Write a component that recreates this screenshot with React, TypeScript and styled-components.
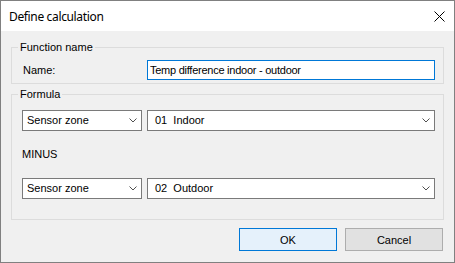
import React from "react";
import styled, { createGlobalStyle } from "styled-components";

const GlobalStyle = createGlobalStyle`
  html, body {
    margin: 0;
    padding: 0;
    background: #ffffff;
  }
  * {
    box-sizing: border-box;
  }
`;

const Window = styled.div`
  width: 455px;
  height: 263px;
  border: 1px solid #808080;
  display: flex;
  flex-direction: column;
  font-family: "Liberation Sans", Arial, sans-serif;
  font-size: 11px;
  color: #000;
`;

const TitleBar = styled.div`
  height: 30px;
  flex: none;
  background: #fff;
  display: flex;
  align-items: center;
  justify-content: space-between;
  padding: 0 9px 0 8px;
`;

const Title = styled.span`
  font-family: "Noto Sans", "Open Sans", sans-serif;
  font-size: 12px;
  letter-spacing: -0.35px;
  line-height: 16px;
  margin-top: 1px;
`;

const CloseIcon = styled.svg`
  display: block;
  margin-top: 1px;
`;

const Body = styled.div`
  flex: 1;
  background: #f0f0f0;
  padding: 10px 10px 0 10px;
  display: flex;
  flex-direction: column;
`;

const Group = styled.fieldset<{ $gap?: number }>`
  margin: ${(p) => p.$gap ?? 0}px 0 0 0;
  padding: 0;
  border: 1px solid #dcdcdc;
  min-width: 0;
`;

const Legend = styled.legend`
  margin-left: 6px;
  padding: 0 2px;
  line-height: 13px;
  font-size: 11px;
`;

const GroupContent = styled.div<{ $top: number; $bottom: number }>`
  padding: ${(p) => p.$top}px 8px ${(p) => p.$bottom}px 10px;
`;

const NameRow = styled.div`
  display: grid;
  grid-template-columns: 125px 1fr;
  align-items: center;
`;

const Label = styled.span`
  line-height: 13px;
  padding-left: 1px;
`;

const TextInput = styled.input`
  height: 20px;
  width: 100%;
  border: 1px solid #0078d7;
  background: #fff;
  outline: none;
  padding: 0 2px;
  margin: 0;
  font-family: "Liberation Sans", Arial, sans-serif;
  font-size: 11px;
  letter-spacing: -0.25px;
  color: #000;
`;

const ComboRow = styled.div`
  display: flex;
  gap: 5px;
`;

const Combo = styled.div<{ $width?: number; $indent: number }>`
  height: 21px;
  ${(p) => (p.$width ? `width: ${p.$width}px; flex: none;` : "flex: 1;")}
  border: 1px solid #7a7a7a;
  background: #fff;
  display: flex;
  align-items: center;
  justify-content: space-between;
  padding: 0 4px 0 ${(p) => p.$indent}px;
  white-space: pre;
`;

const ComboText = styled.span`
  line-height: 13px;
`;

const OperatorLabel = styled.div`
  line-height: 13px;
  margin: 17px 0;
`;

const ButtonRow = styled.div`
  display: flex;
  justify-content: flex-end;
  gap: 8px;
  margin-top: 8px;
  padding-right: 1px;
`;

const Button = styled.button<{ $primary?: boolean }>`
  width: 98px;
  height: 23px;
  margin: 0;
  padding: 0;
  border: 1px solid ${(p) => (p.$primary ? "#0078d7" : "#adadad")};
  background: ${(p) => (p.$primary ? "#e5f1fb" : "#e1e1e1")};
  font-family: "Liberation Sans", Arial, sans-serif;
  font-size: 11px;
  color: #000;
`;

const Chevron = () => (
  <svg width="8" height="5" viewBox="0 0 8 5">
    <polyline
      points="0.5,0.5 4,4 7.5,0.5"
      fill="none"
      stroke="#505050"
      strokeWidth="1"
    />
  </svg>
);

export default function App() {
  return (
    <>
      <GlobalStyle />
      <Window>
        <TitleBar>
          <Title>Define calculation</Title>
          <CloseIcon width="11" height="11" viewBox="0 0 11 11">
            <path d="M0.5 0.5 L10.5 10.5 M10.5 0.5 L0.5 10.5" stroke="#000" strokeWidth="1" />
          </CloseIcon>
        </TitleBar>
        <Body>
          <Group>
            <Legend>Function name</Legend>
            <GroupContent $top={6} $bottom={3}>
              <NameRow>
                <Label>Name:</Label>
                <TextInput readOnly value="Temp difference indoor - outdoor" />
              </NameRow>
            </GroupContent>
          </Group>
          <Group $gap={4}>
            <Legend>Formula</Legend>
            <GroupContent $top={9} $bottom={20}>
              <ComboRow>
                <Combo $width={120} $indent={4}>
                  <ComboText>Sensor zone</ComboText>
                  <Chevron />
                </Combo>
                <Combo $indent={7}>
                  <ComboText>01  Indoor</ComboText>
                  <Chevron />
                </Combo>
              </ComboRow>
              <OperatorLabel>MINUS</OperatorLabel>
              <ComboRow>
                <Combo $width={120} $indent={4}>
                  <ComboText>Sensor zone</ComboText>
                  <Chevron />
                </Combo>
                <Combo $indent={7}>
                  <ComboText>02  Outdoor</ComboText>
                  <Chevron />
                </Combo>
              </ComboRow>
            </GroupContent>
          </Group>
          <ButtonRow>
            <Button $primary>OK</Button>
            <Button>Cancel</Button>
          </ButtonRow>
        </Body>
      </Window>
    </>
  );
}
